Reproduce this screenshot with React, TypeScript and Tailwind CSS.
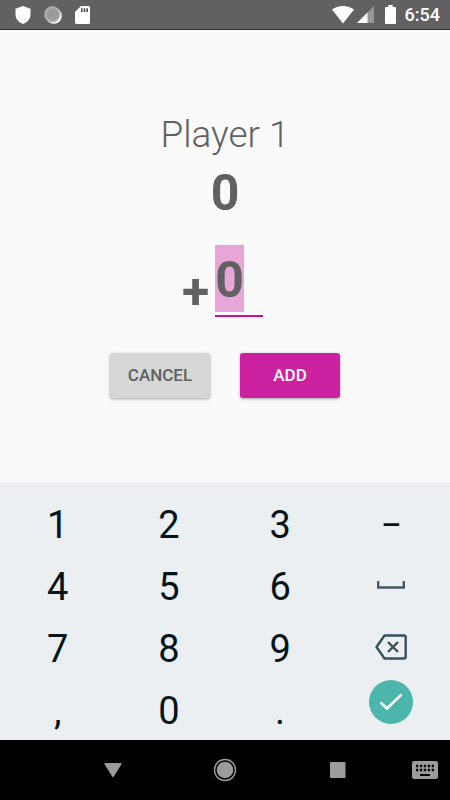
import { useState } from "react";

const keyClass = "flex h-[62px] items-center justify-center text-[#05141b]";
const charKeyClass = "h-[62px] pt-[3px] text-center text-[38px] leading-none text-[#05141b]";

function StatusBar() {
  return (
    <header className="flex h-[30px] items-center justify-between border-b border-[#2e2a2e] bg-[#616161] pl-[15px] pr-[10px] text-white">
      <div className="flex items-center gap-[13px]">
        <svg width="16" height="18" viewBox="0 0 16 18" fill="currentColor">
          <path d="M8 0 15.500 2.800v6c0 4.200-3.200 7.700-7.500 9.200C3.700 16.500.5 13 .5 8.800v-6z" />
        </svg>
        <svg width="18" height="18" viewBox="0 0 18 18">
          <circle cx="9.800" cy="9.800" r="8" fill="#fff" />
          <circle cx="8.300" cy="8.300" r="8" fill="#9b9b9b" />
          <circle
            cx="8.500"
            cy="8.500"
            r="7.200"
            fill="none"
            stroke="#c6c6c6"
            strokeWidth="2"
            strokeDasharray="1.200 1.300"
          />
        </svg>
        <svg width="16" height="18" viewBox="0 0 16 18">
          <path d="M6 0h7.500a1.500 1.500 0 0 1 1.500 1.500v15a1.500 1.500 0 0 1-1.500 1.500h-12A1.500 1.500 0 0 1 0 16.500V6z" fill="#fff" />
          <path d="M6 2.200h1.600v3.800H6zM8.700 2.200h1.600v3.800H8.700zM11.400 2.200H13v3.800h-1.600z" fill="#4a4a4a" />
        </svg>
      </div>
      <div className="flex items-center">
        <svg width="22" height="18" viewBox="0 0 22 18" fill="currentColor">
          <path d="M11 17.500 0 3.500C3 1.200 6.800 0 11 0s8 1.200 11 3.500z" />
        </svg>
        <svg className="ml-[3px]" width="17" height="17" viewBox="0 0 17 17">
          <path d="M17 0v17H0z" fill="#989898" />
          <path d="M10.500 6.500V17H0z" fill="#fff" />
        </svg>
        <svg className="ml-[11px]" width="11" height="19" viewBox="0 0 11 19" fill="currentColor">
          <path d="M3.300 0h4.400v2H10a1 1 0 0 1 1 1v15a1 1 0 0 1-1 1H1a1 1 0 0 1-1-1V3a1 1 0 0 1 1-1h2.300z" />
        </svg>
        <span className="ml-[9px] text-[18px] font-medium leading-6">6:54</span>
      </div>
    </header>
  );
}

function ScoreForm() {
  const [points, setPoints] = useState("0");

  return (
    <main className="flex flex-1 flex-col items-center bg-[#fafafa] pt-[83px] text-[#616161]">
      <h1 className="text-[37px] font-light leading-[44px]">Player 1</h1>
      <p className="mt-[6px] text-[50px] font-bold leading-[60px]">0</p>
      <form className="flex flex-col items-center" onSubmit={(e) => e.preventDefault()}>
        <div className="mt-[22px] flex items-end">
          <label htmlFor="points" className="text-[50px] font-bold leading-[50px]">
            +
          </label>
          <div className="ml-[6px] mr-[5px] w-12 border-b-2 border-[#cc0f95] pb-[3px]">
            <input
              id="points"
              inputMode="numeric"
              value={points}
              onChange={(e) => setPoints(e.target.value)}
              className="block h-[67px] w-[29px] bg-[#e7a5d8] pt-1 text-[50px] font-bold outline-none"
            />
          </div>
        </div>
        <div className="mt-9 flex gap-[30px]">
          <button
            type="button"
            className="h-[45px] w-[100px] rounded-[3px] bg-[#d6d8d7] text-[17px] font-medium shadow-[0_1px_3px_rgba(0,0,0,0.35)]"
          >
            CANCEL
          </button>
          <button
            type="submit"
            className="h-[45px] w-[100px] rounded-[3px] bg-[#cc22a1] text-[17px] font-medium text-white shadow-[0_1px_3px_rgba(0,0,0,0.35)]"
          >
            ADD
          </button>
        </div>
      </form>
    </main>
  );
}

function Keypad() {
  return (
    <section aria-label="Keypad" className="grid grid-cols-4 bg-[#ebeff2] pl-[2px] pr-[3px] pt-[10px]">
      <button className={charKeyClass}>1</button>
      <button className={charKeyClass}>2</button>
      <button className={charKeyClass}>3</button>
      <button className={charKeyClass}>−</button>
      <button className={charKeyClass}>4</button>
      <button className={charKeyClass}>5</button>
      <button className={charKeyClass}>6</button>
      <button className={keyClass} aria-label="Space">
        <svg width="28" height="8" viewBox="0 0 28 8" fill="none" stroke="#455a64" strokeWidth="2.400">
          <path d="M1.200 0v6.500h25.600V0" />
        </svg>
      </button>
      <button className={charKeyClass}>7</button>
      <button className={charKeyClass}>8</button>
      <button className={charKeyClass}>9</button>
      <button className={keyClass} aria-label="Delete">
        <svg width="32" height="26" viewBox="0 0 32 26" fill="none" stroke="#37505c" strokeWidth="2.400">
          <path d="M9.500 1.500H29a1.700 1.700 0 0 1 1.700 1.700v19.600a1.700 1.700 0 0 1-1.700 1.700H9.500L1.500 13z" strokeLinejoin="round" />
          <path d="m13 8 10 10M23 8 13 18" />
        </svg>
      </button>
      <button className={charKeyClass}>,</button>
      <button className={charKeyClass}>0</button>
      <button className={charKeyClass}>.</button>
      <button
        className="mt-[2px] flex size-11 items-center justify-center justify-self-center rounded-full bg-[#4db6ac]"
        aria-label="Done"
      >
        <svg width="24" height="18" viewBox="0 0 24 18" fill="none" stroke="#fff" strokeWidth="2.600">
          <path d="m1.500 9.500 6.500 6L22.500 1.500" />
        </svg>
      </button>
    </section>
  );
}

function NavBar() {
  return (
    <nav className="grid h-[60px] grid-cols-8 items-center justify-items-center bg-black text-[#9c9c9c]">
      <button className="col-span-2 col-start-2" aria-label="Back">
        <svg width="18" height="16" viewBox="0 0 18 16" fill="currentColor">
          <path d="M1.500 1h15a1 1 0 0 1 .8 1.500L9.800 14.600a1 1 0 0 1-1.600 0L.7 2.500A1 1 0 0 1 1.500 1z" />
        </svg>
      </button>
      <button className="col-span-2" aria-label="Home">
        <svg width="24" height="24" viewBox="0 0 24 24">
          <circle cx="12" cy="12" r="10.500" fill="none" stroke="currentColor" strokeWidth="1.400" />
          <circle cx="12" cy="12" r="8.300" fill="currentColor" />
        </svg>
      </button>
      <button className="col-span-2" aria-label="Recent apps">
        <svg width="16" height="16" viewBox="0 0 16 16" fill="currentColor">
          <rect width="15.500" height="16" rx="1" />
        </svg>
      </button>
      <button className="pl-[6px]" aria-label="Switch keyboard">
        <svg width="26" height="18" viewBox="0 0 26 18">
          <rect width="26" height="18" rx="2.200" fill="currentColor" />
          <path d="M4 5h18M4 9h18" stroke="#000" strokeWidth="2.300" strokeDasharray="2.300 1.620" />
          <path d="M8 14h10" stroke="#000" strokeWidth="2" />
        </svg>
      </button>
    </nav>
  );
}

export default function App() {
  return (
    <div className="flex min-h-screen flex-col font-[Roboto,sans-serif]">
      <StatusBar />
      <ScoreForm />
      <Keypad />
      <NavBar />
    </div>
  );
}
